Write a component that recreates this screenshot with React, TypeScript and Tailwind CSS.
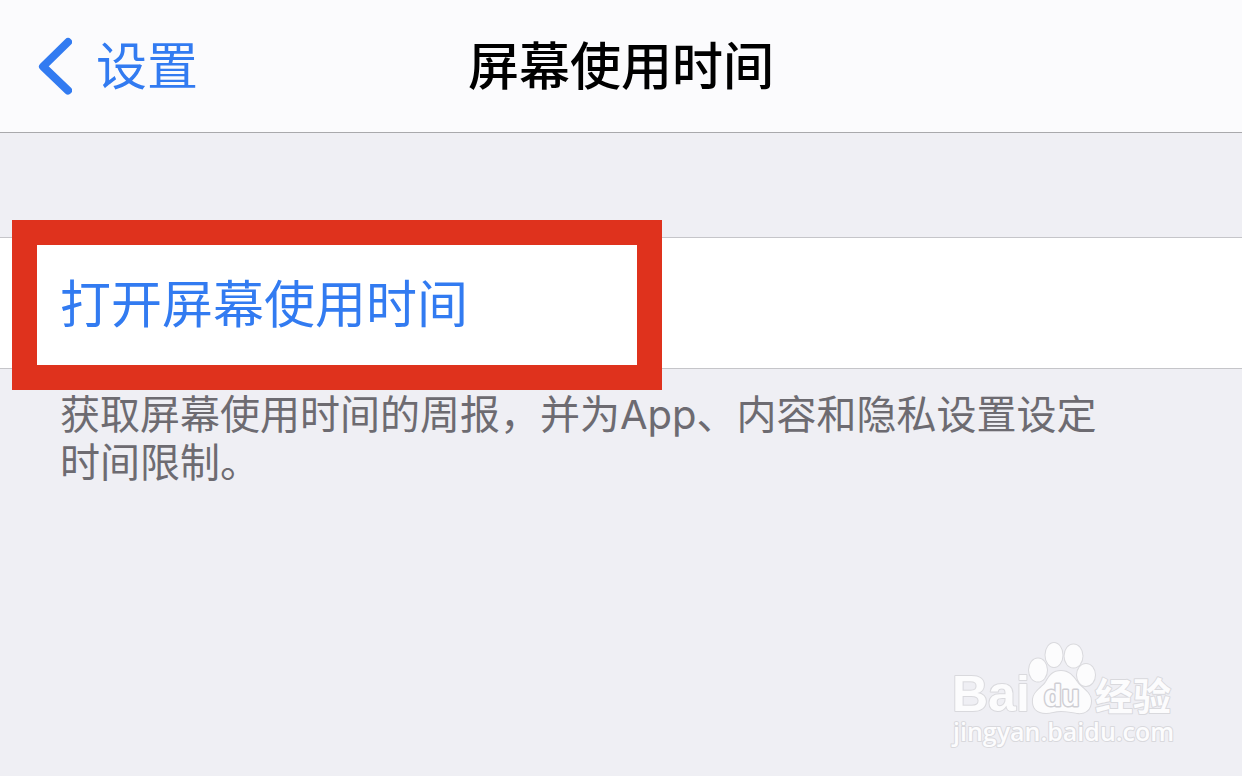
const labels = {
  back: '设置',
  title: '屏幕使用时间',
  action: '打开屏幕使用时间',
  hint: '获取屏幕使用时间的周报，并为App、内容和隐私设置设定时间限制。',
};

function BackChevron() {
  return (
    <svg viewBox="0 0 36 60" className="h-[60px] w-9" fill="none" aria-hidden="true">
      <path
        d="M32 5 7 29.500l25 24"
        stroke="#327bf1"
        strokeWidth="8"
        strokeLinecap="round"
        strokeLinejoin="round"
      />
    </svg>
  );
}

function Watermark() {
  return (
    <svg
      viewBox="0 0 250 120"
      className="pointer-events-none absolute right-[52px] bottom-[20px] h-[120px] w-[250px]"
      fill="#fcfcfd"
      stroke="#d9d9dd"
      strokeWidth="2"
      strokeLinejoin="round"
      paintOrder="stroke"
      role="img"
      aria-label="Baidu 经验"
    >
      <text x="12" y="75" fontSize="50" fontWeight="700" fontFamily="Liberation Sans, sans-serif">
        Bai
      </text>
      <ellipse cx="98" cy="34" rx="9" ry="11.500" />
      <ellipse cx="114" cy="19" rx="8.500" ry="12" />
      <ellipse cx="133.500" cy="20" rx="9" ry="11.500" />
      <ellipse cx="146" cy="39" rx="9" ry="11" />
      <path d="M121 35c8 0 12 5 16 11 4 6 14 10 14 19 0 9-6 13-14 12-6-1-10-2-16-2s-10 2-15 2c-9 0-14-5-13-14 1-8 9-11 13-17 4-7 7-11 15-11Z" />
      <text
        x="104"
        y="70"
        fontSize="29"
        fontWeight="700"
        fontFamily="Liberation Sans, sans-serif"
        stroke="#cfcfd4"
        strokeWidth="3"
      >
        du
      </text>
      <text
        x="155"
        y="74"
        fontSize="38"
        fontWeight="700"
        fontFamily="Noto Sans CJK SC, sans-serif"
      >
        经验
      </text>
      <text x="13" y="105" fontSize="25" fontWeight="600" fontFamily="Open Sans, sans-serif">
        jingyan.baidu.com
      </text>
    </svg>
  );
}

export default function App() {
  return (
    <div className="relative min-h-screen bg-[#efeff4] font-['Inter','Noto_Sans_CJK_SC',sans-serif]">
      <header className="grid h-[133px] grid-cols-[1fr_auto_1fr] items-center border-b border-[#a9a9ac] bg-[#fbfbfd] px-9 pt-0.5">
        <button type="button" className="flex items-center gap-6 text-[#327bf1]">
          <BackChevron />
          <span className="text-[51px] leading-[60px]">{labels.back}</span>
        </button>
        <h1 className="text-[51px] leading-[60px] font-medium text-black">{labels.title}</h1>
      </header>

      <main className="pt-[104px]">
        <section className="relative border-y border-[#c5c5c9] bg-white">
          <button
            type="button"
            className="block h-[130px] w-full px-[60px] pt-1 text-left text-[51px] leading-[60px] text-[#327bf1]"
          >
            {labels.action}
          </button>
          <div className="pointer-events-none absolute -top-[18px] left-3 h-[170px] w-[650px] border-[25px] border-[#df321d]" />
        </section>
        <p className="pt-[22px] pr-[120px] pl-[60px] text-[40px] leading-[48px] text-[#6d6b71]">
          {labels.hint}
        </p>
      </main>

      <Watermark />
    </div>
  );
}
